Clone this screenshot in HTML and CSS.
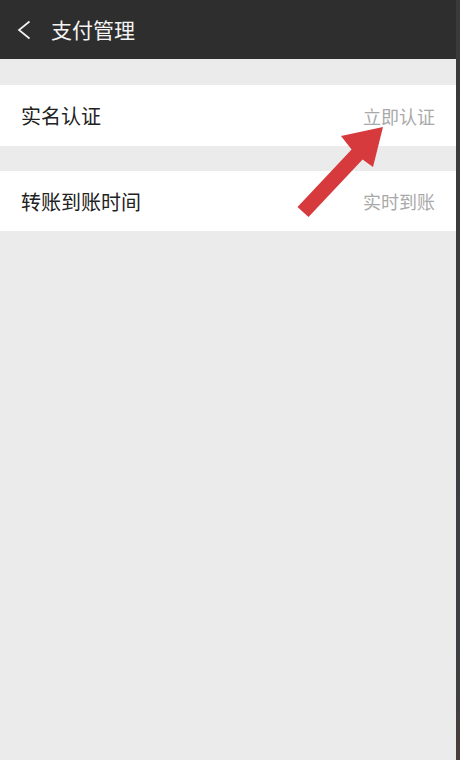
FILE: index.html
```html
<!DOCTYPE html>
<html lang="zh-CN">
<head>
<meta charset="utf-8">
<title>支付管理</title>
<link rel="stylesheet" href="styles.css">
</head>
<body>
<div class="screen">
  <div class="main">
    <header class="topbar">
      <svg class="back" width="14" height="20" viewBox="0 0 14 20"><path d="M12.5 1.5 L2 10 L12.5 18.5" fill="none" stroke="#f2f2f2" stroke-width="1.7"/></svg>
      <span class="title">支付管理</span>
    </header>
    <div class="group">
      <div class="row"><span class="label">实名认证</span><span class="value">立即认证</span></div>
    </div>
    <div class="group">
      <div class="row"><span class="label">转账到账时间</span><span class="value">实时到账</span></div>
    </div>
    <svg class="arrow" width="460" height="260" viewBox="0 0 460 260">
      <polygon points="383,127 341,136 351.6,149.4 297.5,206.9 308.5,217.1 362.6,159.6 373,167" fill="#d63a3c"/>
    </svg>
  </div>
  <div class="edge"></div>
</div>
</body>
</html>
```
FILE: styles.css
```css
html, body {
  margin: 0;
  padding: 0;
  height: 100%;
}
body {
  font-family: "Noto Sans CJK SC", "Noto Sans", sans-serif;
  background: #ebebeb;
}
.screen {
  display: flex;
  height: 760px;
  width: 460px;
  overflow: hidden;
}
.main {
  position: relative;
  width: 456px;
  flex: none;
  background: #ebebeb;
  display: flex;
  flex-direction: column;
}
.edge {
  width: 4px;
  flex: none;
  background: linear-gradient(#3a3a3a, #3b3f44 85%, #4a3e3a);
}
.topbar {
  height: 59px;
  background: #2e2e2e;
  display: flex;
  align-items: center;
  padding-left: 17px;
  box-sizing: border-box;
}
.back {
  display: block;
  margin-right: 20px;
}
.title {
  color: #f4f4f4;
  font-size: 21px;
  line-height: 1;
}
.group {
  margin-top: 26px;
  background: #fff;
}
.group + .group {
  margin-top: 25px;
}
.row {
  height: 61px;
  display: flex;
  align-items: center;
  justify-content: space-between;
  padding: 0 21px 0 21px;
  box-sizing: border-box;
}
.group + .group .row {
  height: 60px;
}
.label {
  font-size: 20px;
  color: #222;
}
.value {
  font-size: 18px;
  color: #a9a9a9;
}
.arrow {
  position: absolute;
  left: 0;
  top: 0;
  pointer-events: none;
}
```
